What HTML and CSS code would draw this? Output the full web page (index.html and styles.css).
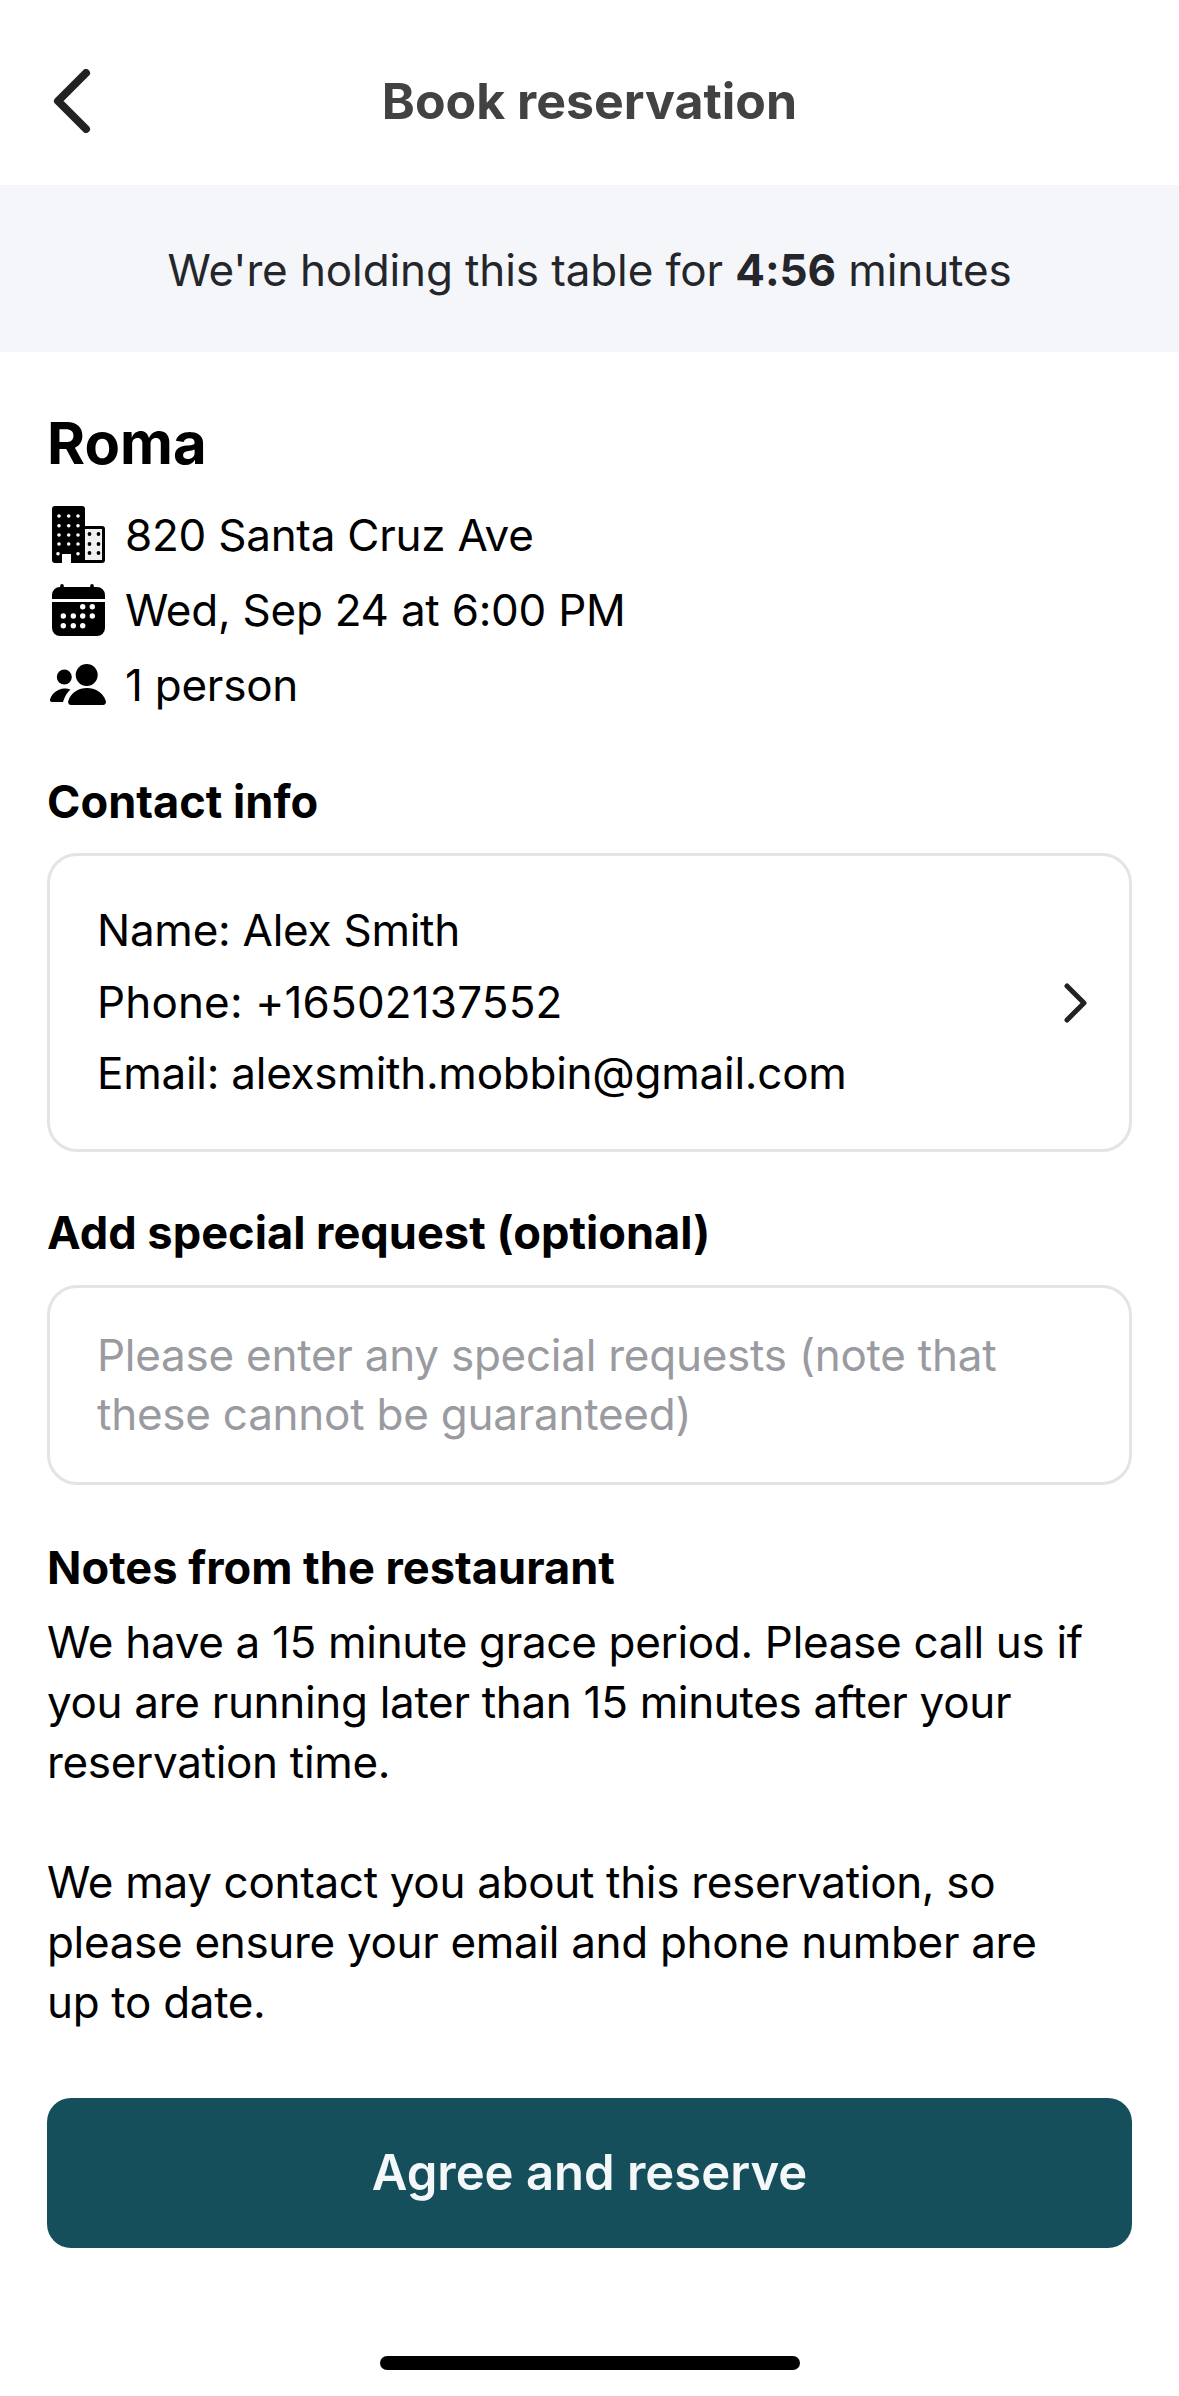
FILE: index.html
```html
<!DOCTYPE html>
<html lang="en">
<head>
    <meta charset="UTF-8">
    <meta name="viewport" content="width=device-width, initial-scale=1.0">
    <title>Book reservation</title>
    <link rel="stylesheet" href="styles.css">
</head>
<body>
    <div class="page">
        <header class="top-bar">
            <svg class="back-icon" viewBox="0 0 40 64" width="40" height="64">
                <path d="M34 4 L6 32 L34 60" fill="none" stroke="#222" stroke-width="8" stroke-linecap="round" stroke-linejoin="round"/>
            </svg>
            <div class="top-title">Book reservation</div>
        </header>

        <div class="hold-banner">We're holding this table for <b>4:56</b> minutes</div>

        <main class="content">
            <h1 class="place-name">Roma</h1>
            <div class="info-rows">
                <div class="info-row">
                    <svg class="info-icon" viewBox="0 0 53 57" width="53" height="57">
                        <path d="M3 0H30a3 3 0 0 1 3 3V57H19V48H10V57H3a3 3 0 0 1-3-3V3a3 3 0 0 1 3-3Z" fill="#000"/>
                        <path d="M33 20H50a3 3 0 0 1 3 3V54a3 3 0 0 1-3 3H33V54H50V23H33Z" fill="#000"/>
                        <rect x="33" y="23" width="17" height="31" fill="#f1f1f1"/>
                        <g fill="#fff">
                            <circle cx="7" cy="10" r="1.8"/><circle cx="16.7" cy="10" r="1.8"/><circle cx="26" cy="10" r="1.8"/>
                            <circle cx="7" cy="19.7" r="1.8"/><circle cx="16.7" cy="19.7" r="1.8"/><circle cx="26" cy="19.7" r="1.8"/>
                            <circle cx="7" cy="29" r="1.8"/><circle cx="16.7" cy="29" r="1.8"/><circle cx="26" cy="29" r="1.8"/>
                            <circle cx="7" cy="38" r="1.8"/><circle cx="16.7" cy="38" r="1.8"/><circle cx="26" cy="38" r="1.8"/>
                            <circle cx="6" cy="47.7" r="1.8"/><circle cx="26" cy="47.7" r="1.8"/>
                        </g>
                        <g fill="#000">
                            <circle cx="37.5" cy="28" r="1.9"/><circle cx="46.5" cy="28" r="1.9"/>
                            <circle cx="37.5" cy="38" r="1.9"/><circle cx="46.5" cy="38" r="1.9"/>
                            <circle cx="37.5" cy="47" r="1.9"/><circle cx="46.5" cy="47" r="1.9"/>
                        </g>
                    </svg>
                    <span>820 Santa Cruz Ave</span>
                </div>
                <div class="info-row">
                    <svg class="info-icon" viewBox="0 0 53 52" width="53" height="52">
                        <path d="M10 0a1.8 1.8 0 0 1 1.8 1.8V3H38.200V1.800a1.800 1.800 0 0 1 3.600 0V3H45a8 8 0 0 1 8 8V15H0V11a8 8 0 0 1 8-8H8.200V1.800A1.800 1.800 0 0 1 10 0Z" fill="#000"/>
                        <path d="M0 18H53V44a8 8 0 0 1-8 8H8a8 8 0 0 1-8-8Z" fill="#000"/>
                        <g fill="#fff">
                            <circle cx="30.700" cy="22.700" r="2.700"/><circle cx="40.300" cy="22.700" r="2.700"/>
                            <circle cx="11.300" cy="32" r="2.700"/><circle cx="21.300" cy="32" r="2.700"/><circle cx="30.700" cy="32" r="2.700"/><circle cx="40.300" cy="32" r="2.700"/>
                            <circle cx="11.300" cy="41.700" r="2.700"/><circle cx="21.300" cy="41.700" r="2.700"/><circle cx="30.700" cy="41.700" r="2.700"/>
                        </g>
                    </svg>
                    <span>Wed, Sep 24 at 6:00 PM</span>
                </div>
                <div class="info-row">
                    <svg class="info-icon people-icon" viewBox="0 0 56 41" width="56" height="41">
                        <circle cx="14.300" cy="13" r="7.500" fill="#000"/>
                        <circle cx="36.700" cy="11" r="11" fill="#000"/>
                        <path d="M2 38a2 2 0 0 1-2-2.500C2 29 8 25 14 24.500c3 0 5 .5 6.500 1C17 28.500 14.500 33 13 38Z" fill="#000"/>
                        <path d="M21 41a3 3 0 0 1-2.700-4C21 28 29 24 37 24S53 28 55.800 37a3 3 0 0 1-2.800 4Z" fill="#000"/>
                    </svg>
                    <span>1 person</span>
                </div>
            </div>

            <h2 class="section-title contact-title">Contact info</h2>
            <div class="contact-card">
                <div class="contact-lines">
                    <div>Name: Alex Smith</div>
                    <div class="phone-line">Phone: +16502137552</div>
                    <div>Email: alexsmith.mobbin@gmail.com</div>
                </div>
                <svg class="chevron" viewBox="0 0 26 40" width="26" height="40">
                    <path d="M4 3 L21 20 L4 37" fill="none" stroke="#222" stroke-width="5" stroke-linecap="round" stroke-linejoin="round"/>
                </svg>
            </div>

            <h2 class="section-title request-title">Add special request (optional)</h2>
            <div class="request-box">Please enter any special requests (note that these cannot be guaranteed)</div>

            <h2 class="section-title notes-title">Notes from the restaurant</h2>
            <p class="notes">We have a 15 minute grace period. Please call us if you are running later than 15 minutes after your reservation time.</p>
            <p class="notes notes-second">We may contact you about this reservation, so please ensure your email and phone number are<br>up to date.</p>

            <button class="reserve-button">Agree and reserve</button>
        </main>

        <div class="home-bar"></div>
    </div>
</body>
</html>
```

FILE: styles.css
```css
* {
    box-sizing: border-box;
}

body {
    margin: 0;
    background-color: #fff;
    color: #000;
    font-family: 'Inter', 'Liberation Sans', sans-serif;
}

.page {
    width: 1179px;
    height: 2396px;
    display: flex;
    flex-direction: column;
}

.top-bar {
    position: relative;
    height: 185px;
    flex-shrink: 0;
    display: flex;
    align-items: center;
    justify-content: center;
    padding-top: 16px;
}

.back-icon {
    position: absolute;
    left: 52px;
    top: 69px;
}

.top-title {
    font-size: 50px;
    font-weight: 700;
    color: #424242;
}

.hold-banner {
    height: 167px;
    flex-shrink: 0;
    background-color: #f4f6fa;
    color: #24262b;
    font-size: 44px;
    letter-spacing: -0.11px;
    line-height: 170px;
    text-align: center;
}

.content {
    padding: 0 47px;
    flex-grow: 1;
}

.place-name {
    margin: 56px 0 0;
    font-size: 58px;
    line-height: 70px;
    font-weight: 700;
}

.info-rows {
    margin-top: 19px;
}

.info-row {
    display: flex;
    align-items: center;
    height: 75px;
    font-size: 44px;
    letter-spacing: -0.25px;
}

.info-icon {
    flex-shrink: 0;
    margin-left: 5px;
    margin-right: 20px;
}

.people-icon {
    margin-left: 3px;
    margin-right: 19px;
}

.section-title {
    margin: 0;
    font-size: 45.2px;
    line-height: 60px;
    font-weight: 700;
}

.contact-title {
    margin-top: 50px;
}

.contact-card {
    margin-top: 21px;
    height: 299px;
    border: 3px solid #e4e4e6;
    border-radius: 30px;
    padding: 0 40px 0 47px;
    display: flex;
    align-items: center;
    justify-content: space-between;
}

.contact-lines {
    font-size: 44px;
    line-height: 71.5px;
    letter-spacing: -0.25px;
}

.phone-line {
    letter-spacing: 0.15px;
}

.request-title {
    margin-top: 51px;
}

.request-box {
    margin-top: 22px;
    height: 200px;
    border: 3px solid #e4e4e6;
    border-radius: 30px;
    padding: 38px 47px 0;
    color: #9a9ba1;
    font-size: 44px;
    line-height: 59px;
    letter-spacing: -0.25px;
}

.notes-title {
    margin-top: 53px;
}

.notes {
    margin: 14px 0 0;
    font-size: 44px;
    line-height: 60px;
    letter-spacing: -0.32px;
}

.notes-second {
    margin-top: 60px;
}

.reserve-button {
    display: block;
    width: 100%;
    height: 150px;
    margin-top: 66px;
    border: none;
    border-radius: 24px;
    background-color: #154f5c;
    color: #f4f7f8;
    font-family: inherit;
    font-size: 49px;
    font-weight: 600;
    padding-bottom: 3px;
}

.home-bar {
    flex-shrink: 0;
    align-self: center;
    width: 420px;
    height: 14px;
    margin-bottom: 26px;
    border-radius: 7px;
    background-color: #000;
}
```
